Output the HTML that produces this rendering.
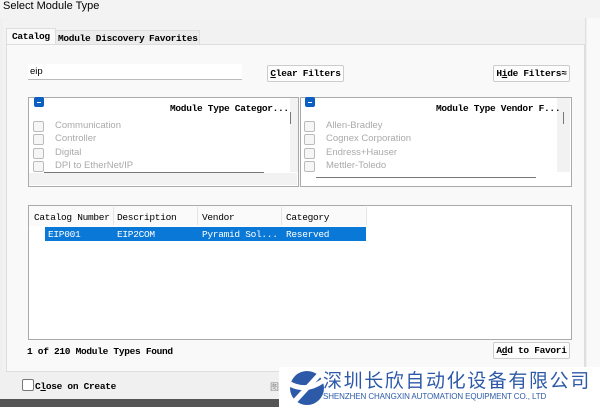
<!DOCTYPE html><html><head><style>
body{margin:0;width:600px;height:407px;background:#f0f0f0;position:relative;overflow:hidden;font-family:"Liberation Serif","SimSun",serif;font-size:10px;color:#000}
.a{position:absolute}
.sans{font-family:"Liberation Sans",sans-serif}
.mono{font-family:"Liberation Mono","Noto Sans CJK SC",monospace;font-size:9.5px;font-weight:bold;letter-spacing:-0.3px}
.cb{position:absolute;width:9px;height:9px;border:1px solid #bbb;border-radius:2px;background:#f6f6f6}
.cbm{position:absolute;width:10px;height:10px;background:#0a5fc0;border-radius:2px}
.cbm:after{content:"";position:absolute;left:3px;top:4.5px;width:4px;height:1px;background:#fff}
.g{position:absolute;color:#aaa;font-family:"Liberation Sans",sans-serif;font-size:9.5px}
.btn{position:absolute;border:1px solid #ccc;background:#fdfdfd;border-radius:2px;text-align:center;line-height:15px}
</style></head><body>
<div class="a" style="left:0;top:0;width:600px;height:18px;background:#f3f3f3"></div>
<div class="a sans" style="left:3px;top:0;font-size:11px">Select Module Type</div>
<div class="a" style="left:3px;top:18px;width:582px;height:352px;background:#f2f2f2;border-right:1px solid #e0e0e0"></div>
<div class="a" style="left:587px;top:18px;width:13px;height:352px;background:#f9f9f9"></div>
<div class="a" style="left:6px;top:28px;width:48px;height:16px;background:#f9f9f9;border:1px solid #ddd;border-bottom:none"></div>
<div class="a" style="left:55px;top:30px;width:143px;height:14px;background:#ececec;border:1px solid #ddd;border-bottom:none"></div>
<div class="a mono" style="left:12px;top:31px">Catalog</div>
<div class="a mono" style="left:58px;top:33px">Module Discovery</div>
<div class="a mono" style="left:149px;top:33px">Favorites</div>
<div class="a" style="left:6px;top:44px;width:577px;height:326px;background:#f9f9f9;border:1px solid #ddd"></div>
<div class="a" style="left:28px;top:64px;width:214px;height:15px;background:#fff;border-bottom:1px solid #bbb"></div>
<div class="a sans" style="left:30px;top:66px;font-size:9.5px">eip</div>
<div class="btn mono" style="left:267px;top:65px;width:75px;height:15px"><u>C</u>lear Filters</div>
<div class="btn mono" style="left:493px;top:65px;width:75px;height:15px">H<u>i</u>de Filters≈</div>
<div class="a" style="left:28px;top:97px;width:269px;height:88px;background:#fff;border:1px solid #aaa"></div>
<div class="a" style="left:290px;top:98px;width:8px;height:74px;background:#f2f2f2"></div>
<div class="a" style="left:290px;top:112px;width:1px;height:12px;background:#777"></div>
<div class="a" style="left:44px;top:172px;width:220px;height:1px;background:#777"></div>
<div class="a" style="left:29px;top:173px;width:268px;height:12px;background:#f2f2f2"></div>
<div class="cbm" style="left:34px;top:97px"></div>
<div class="a mono" style="left:170px;top:103px">Module Type Categor...</div>
<div class="cb" style="left:33px;top:121px"></div><div class="g" style="left:55px;top:120px">Communication</div>
<div class="cb" style="left:33px;top:134px"></div><div class="g" style="left:55px;top:133px">Controller</div>
<div class="cb" style="left:33px;top:148px"></div><div class="g" style="left:55px;top:147px">Digital</div>
<div class="cb" style="left:33px;top:161px"></div><div class="g" style="left:55px;top:160px">DPI to EtherNet/IP</div>
<div class="a" style="left:300px;top:97px;width:270px;height:88px;background:#fff;border:1px solid #aaa"></div>
<div class="a" style="left:557px;top:98px;width:13px;height:74px;background:#f2f2f2"></div>
<div class="a" style="left:563px;top:112px;width:1px;height:12px;background:#777"></div>
<div class="a" style="left:316px;top:177px;width:220px;height:1px;background:#777"></div>
<div class="cbm" style="left:305px;top:97px"></div>
<div class="a mono" style="left:436px;top:103px">Module Type Vendor F...</div>
<div class="cb" style="left:304px;top:121px"></div><div class="g" style="left:326px;top:120px">Allen-Bradley</div>
<div class="cb" style="left:304px;top:134px"></div><div class="g" style="left:326px;top:133px">Cognex Corporation</div>
<div class="cb" style="left:304px;top:148px"></div><div class="g" style="left:326px;top:147px">Endress+Hauser</div>
<div class="cb" style="left:304px;top:161px"></div><div class="g" style="left:326px;top:160px">Mettler-Toledo</div>
<div class="a" style="left:28px;top:205px;width:542px;height:133px;background:#fff;border:1px solid #aaa"></div>
<div class="a" style="left:29px;top:206px;width:337px;height:20px;background:#fafafa"></div>
<div class="a" style="left:113px;top:207px;width:1px;height:18px;background:#e5e5e5"></div>
<div class="a" style="left:197px;top:207px;width:1px;height:18px;background:#e5e5e5"></div>
<div class="a" style="left:281px;top:207px;width:1px;height:18px;background:#e5e5e5"></div>
<div class="a" style="left:366px;top:207px;width:1px;height:18px;background:#e5e5e5"></div>
<div class="a mono" style="left:34px;top:212px;font-weight:normal">Catalog Number</div>
<div class="a mono" style="left:117px;top:212px;font-weight:normal">Description</div>
<div class="a mono" style="left:202px;top:212px;font-weight:normal">Vendor</div>
<div class="a mono" style="left:286px;top:212px;font-weight:normal">Category</div>
<div class="a" style="left:45px;top:227px;width:321px;height:14px;background:#0a78d7"></div>
<div class="a mono" style="left:48px;top:229px;color:#fff;font-weight:normal">EIP001</div>
<div class="a mono" style="left:117px;top:229px;color:#fff;font-weight:normal">EIP2COM</div>
<div class="a mono" style="left:202px;top:229px;color:#fff;font-weight:normal">Pyramid Sol...</div>
<div class="a mono" style="left:286px;top:229px;color:#fff;font-weight:normal">Reserved</div>
<div class="a mono" style="left:27px;top:346px">1  of 210 Module Types Found</div>
<div class="btn mono" style="left:493px;top:342px;width:75px;height:15px">A<u>d</u>d to Favori</div>
<div class="a" style="left:22px;top:379px;width:10px;height:10px;border:1px solid #777;border-radius:2px;background:#fff"></div>
<div class="a mono" style="left:35px;top:381px">C<u>l</u>ose on Create</div>
<div class="a" style="left:0;top:399px;width:600px;height:8px;background:#555"></div>
<div class="a" style="left:279px;top:367px;width:321px;height:40px;background:#fff"></div>
<div class="a" style="left:270px;top:380px;font-family:'Noto Sans CJK SC',sans-serif;font-size:9px;color:#888">图</div>
<svg class="a" style="left:287px;top:369px" width="40" height="38" viewBox="0 0 40 38"><circle cx="20" cy="19" r="17" fill="#2d5aa8"/><path d="M3 12 Q20 22 37 8 L37 14 Q20 26 3 18Z" fill="#fff"/><path d="M8 32 L32 6" stroke="#fff" stroke-width="5"/></svg>
<div class="a" style="left:323px;top:369px;font-family:'Noto Sans CJK SC',sans-serif;font-size:19px;color:#2d5aa8;letter-spacing:1.6px;line-height:22px;white-space:nowrap">深圳长欣自动化设备有限公司</div>
<div class="a sans" style="left:323px;top:392px;font-size:8px;color:#2d5aa8;letter-spacing:-0.1px;white-space:nowrap">SHENZHEN CHANGXIN AUTOMATION EQUIPMENT CO., LTD</div>
</body></html>
